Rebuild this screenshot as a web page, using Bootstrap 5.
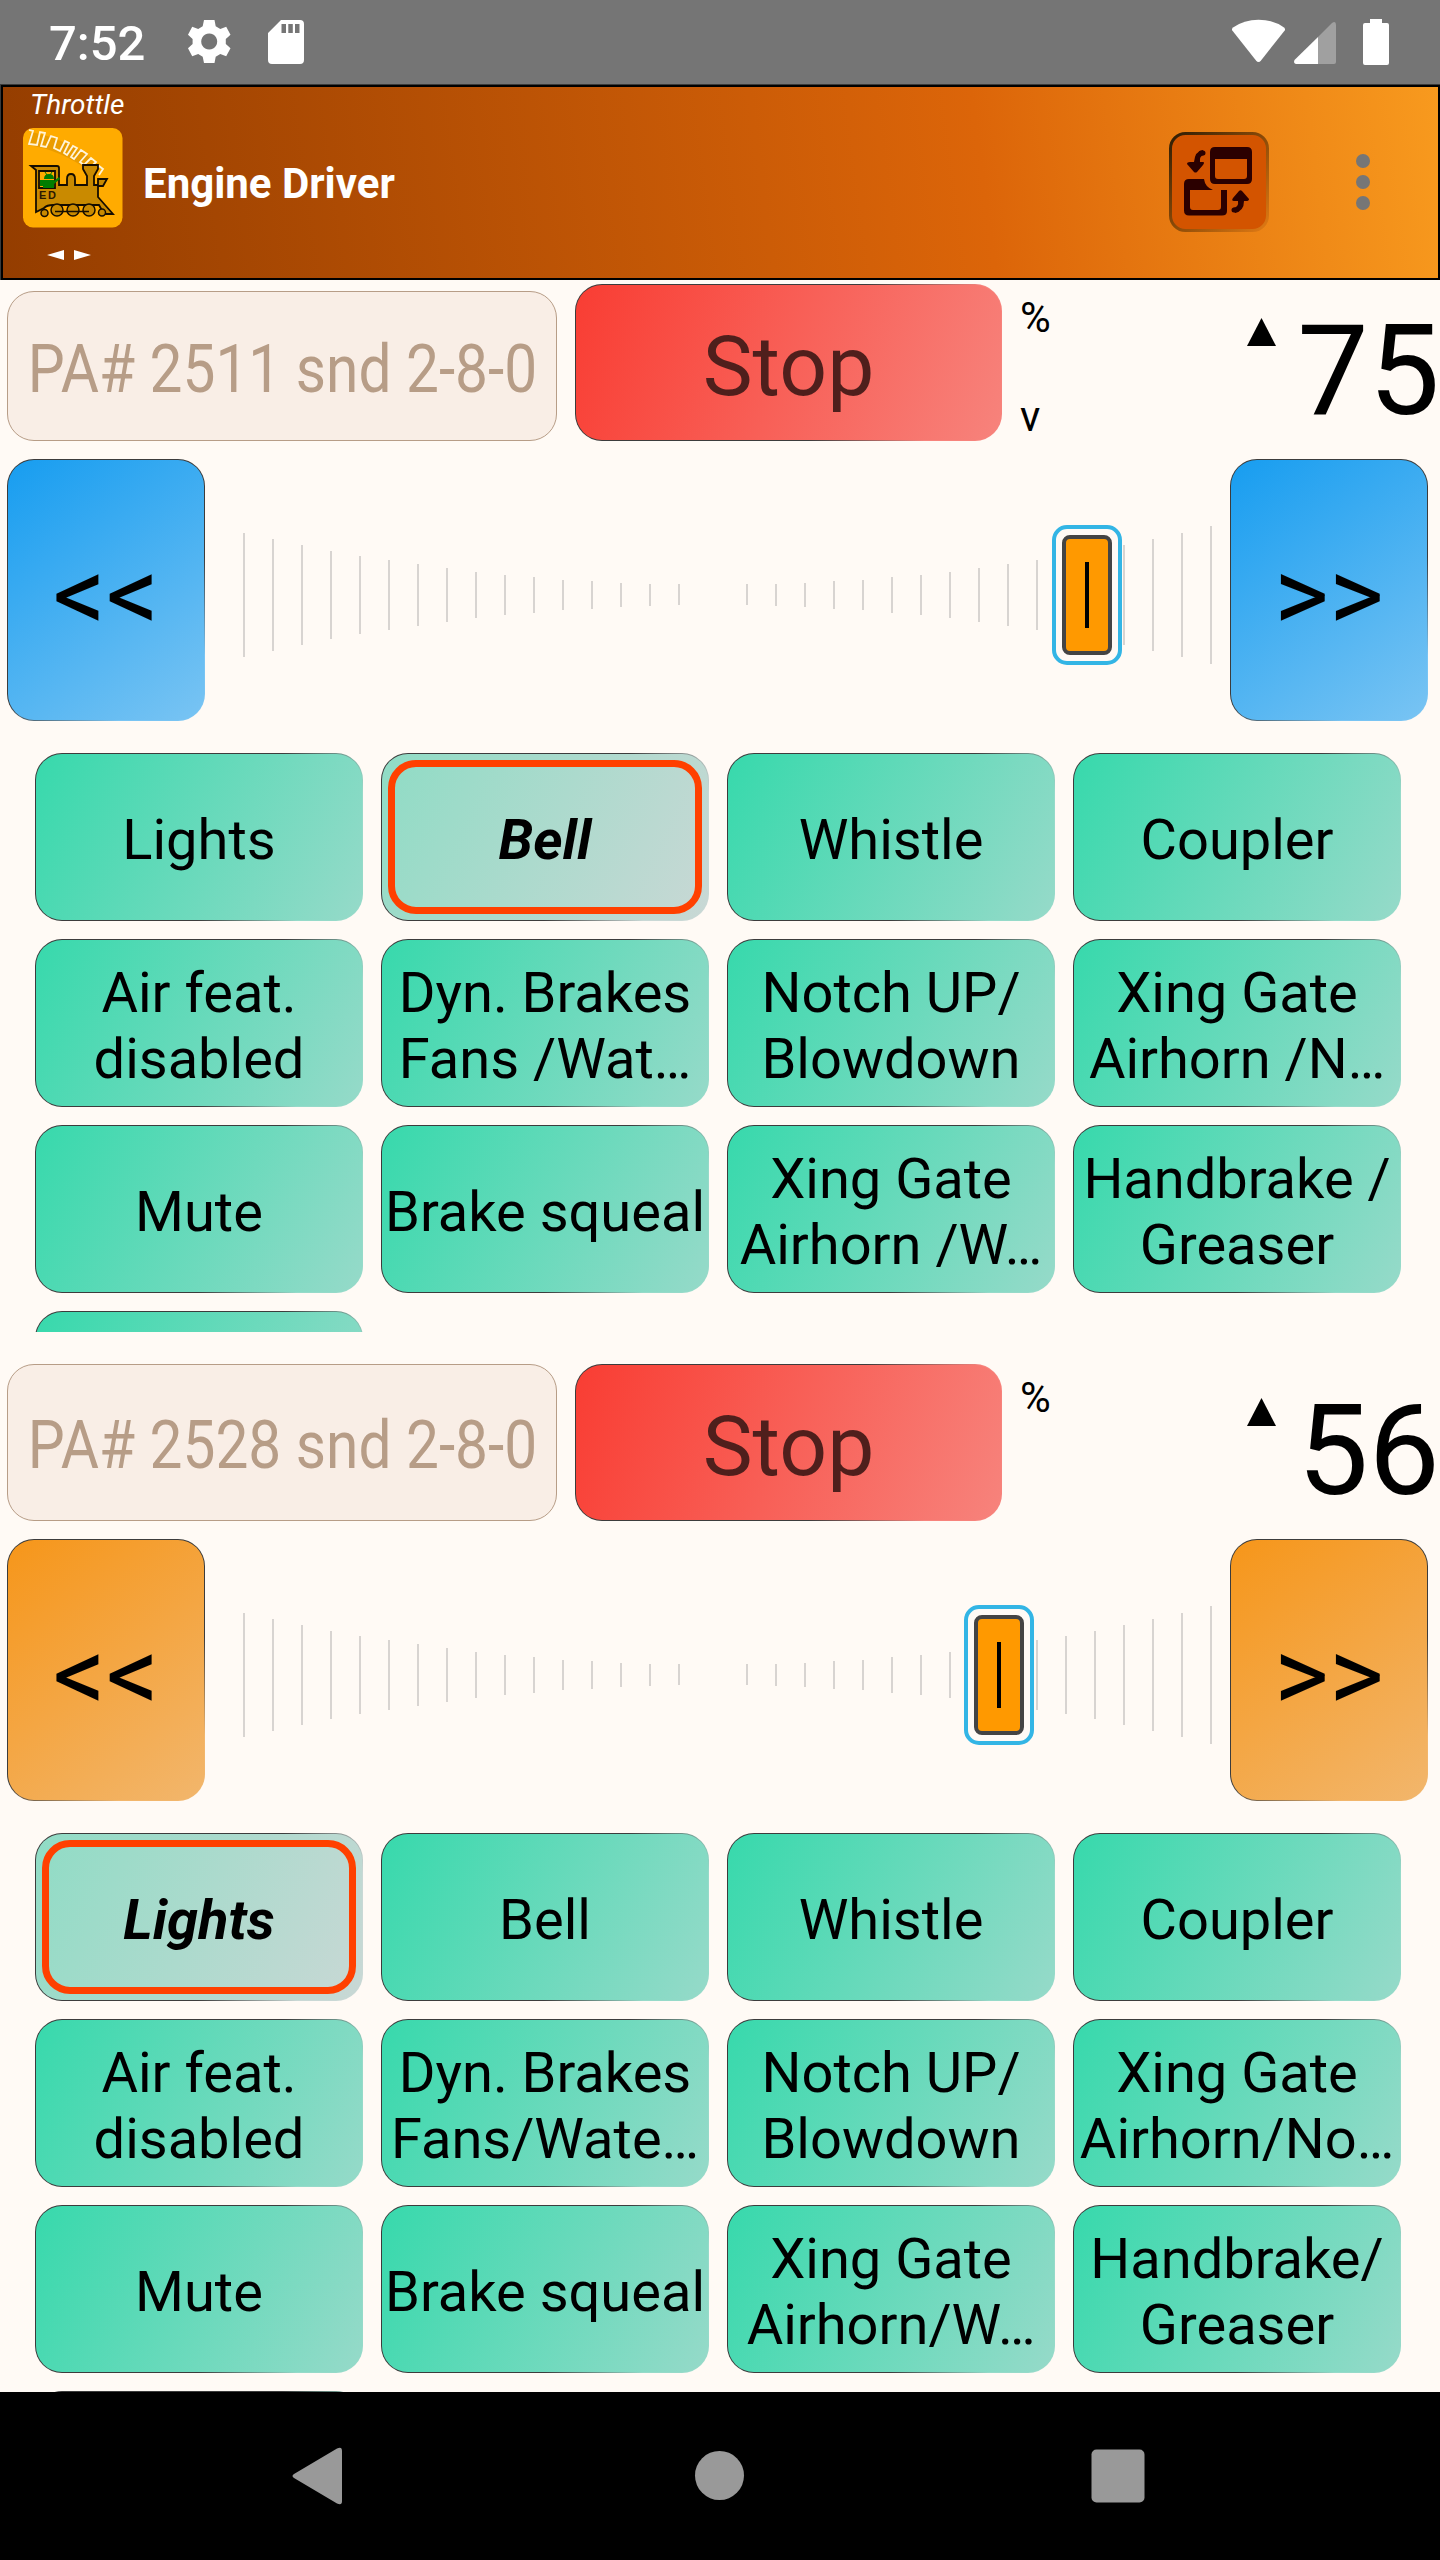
<!DOCTYPE html>
<html lang="en">
<head>
<meta charset="utf-8">
<meta name="viewport" content="width=device-width, initial-scale=1">
<title>Engine Driver</title>
<link rel="stylesheet" href="https://cdn.jsdelivr.net/npm/bootstrap@5.3.0/dist/css/bootstrap.min.css">
<style>
body{background:#fffaf5;font-family:Roboto,sans-serif;color:#000;width:1440px;height:2560px;overflow:hidden}
svg{display:block;flex:none}
.statusbar{height:84px;background:#757575;color:#fff;padding:0 50px 0 49px}
.clock{font-size:49px;font-weight:500;line-height:84px;padding-top:4px;width:138px}
.sdcard{margin-left:37px}
.appbar{height:196px;border-top:1px solid #3a3a3a;border-left:1px solid #3a3a3a}
.appbar-in{border:2px solid #000;background:linear-gradient(82.3deg,#943d00,#dc6509 68%,#f89a1e);padding:0 68px 0 20px}
.brandcol{width:100px}
.screenname{font-size:28px;font-style:italic;line-height:33px;color:#fff;padding-left:7px;margin-top:1px}
.apptitle{font-size:42px;font-weight:700;color:#fff;line-height:1;padding:2px 0 0 20px}
.overflowdots{margin:67px 0 0 87px}
.throttle{height:1080px}
.headrow{height:161px;padding-left:7px}
.btn.pad{--bs-btn-color:#000;font-family:inherit;border:1px solid transparent;border-radius:27px;padding:0;display:flex;align-items:center;justify-content:center;color:#000;white-space:nowrap;flex:none;
 background:linear-gradient(var(--ang),var(--c1),var(--c2)) padding-box,linear-gradient(var(--ang),#3c3c3c 60%,var(--c2) 84%) border-box}
.btn.loco{width:550px;height:150px;background:#f9eee6;border-color:#b79d87;color:#b79d87;font-size:67.5px;line-height:1;padding-top:6px}
.btn.loco.tall{height:157px;padding-top:5px}
.loco span{transform:scaleX(.868)}
.btn.stop{--ang:110.2deg;--c1:#f93d33;--c2:#f7837c;width:427px;height:157px;margin-left:18px;font-size:84px;line-height:1;padding-top:8px;color:#4f1f1c}
.btn.dir{width:198px;height:262px;font-size:105px;line-height:1;padding-top:10px;--ang:142.9deg}
.blue{--c1:#179df0;--c2:#79c4f3}
.amber{--c1:#f6961a;--c2:#f2b66c}
.units{font-size:42px;line-height:1;padding:17px 0 3px;margin-left:18px;height:161px;width:40px}
.uparrow{margin:38px 21px 0 0}
.speedval{font-size:127px;line-height:1;height:134px}
.dirrow{margin-top:18px;padding:0 11px 0 7px;height:262px}
.fngrid{display:grid;grid-template-columns:repeat(4,328px);grid-auto-rows:168px;gap:18px;padding-left:35px;margin-top:32px;height:579px;overflow:hidden}
.throttle + .throttle .fngrid{height:559px}
.throttle + .throttle{height:1032px}
.btn.fn{--ang:117.1deg;--c1:#37d9ac;--c2:#96dac9;font-size:56px;line-height:66px;padding-top:6px}
.btn.fn.on{--c1:#8fdcc5;--c2:#c9d8d5;font-weight:700;font-style:italic;padding:6px}
.on span{border:7px solid #ff4000;border-radius:28px;width:314px;height:154px;line-height:146px}
.navkeys{height:168px;background:#000}
</style>
<script src="https://cdn.jsdelivr.net/npm/bootstrap@5.3.0/dist/js/bootstrap.bundle.min.js"></script>
</head>
<body class="d-flex flex-column">
<svg width="0" height="0" class="position-absolute">
 <symbol id="ticks" viewBox="205 459 1025 262">
  <path stroke="#d8d4d1" stroke-width="2" fill="none" d="M244 533v124M273 539v112M302 545v100M331 551v88M360 556v78M389 560v70M418 564v62M447 568v54M476 572v46M505 575v40M534 577v36M563 580v30M592 581v28M621 583v24M650 584v22M679 584v21M747 584v21M776 584v22M805 583v24M834 581v28M863 580v30M892 577v36M921 575v40M950 572v46M979 568v54M1008 564v62M1037 560v70M1066 556v78M1095 551v88M1124 545v100M1153 539v112M1182 533v124M1211 526v138"/>
 </symbol>
 <symbol id="knob" viewBox="0 0 70 140">
  <rect x="2" y="2" width="66" height="136" rx="13" fill="#fffaf5" stroke="#33b5e5" stroke-width="4"/>
  <rect x="12" y="12" width="46" height="116" rx="6" fill="#ff9900" stroke="#444" stroke-width="4"/>
  <path d="M35 37v66" stroke="#000" stroke-width="4"/>
 </symbol>
</svg>

<div class="statusbar d-flex align-items-center flex-shrink-0">
 <div class="clock">7:52</div>
 <svg width="44" height="46" viewBox="0 0 44 46"><path fill="#fff" fill-rule="evenodd" d="M17 1h10.500l1.200 6.300 4.600 2.700 5.900-2.300 4.300 8-4.700 4.200v5.200l4.700 4.200-4.300 8-5.900-2.300-4.600 2.700-1.200 6.300h-10.500l-1.300-6.300-4.500-2.700-6 2.300-4.200-8 4.600-4.200v-5.200l-4.600-4.200 4.200-8 6 2.300 4.500-2.700zM22.200 14.500a8 8 0 1 0 .01 0z"/></svg>
 <svg class="sdcard" width="36" height="46" viewBox="0 0 36 46"><path fill="#fff" fill-rule="evenodd" d="M13 1h19a4 4 0 0 1 4 4v36a4 4 0 0 1-4 4H4a4 4 0 0 1-4-4V14zM13.500 5v9h4.500V5zM20.300 5v9h4.500V5zM27 5v9h4.500V5z"/></svg>
 <svg class="ms-auto" width="160" height="48" viewBox="1230 18 160 48">
  <path fill="#fff" d="M1232.300 30.500Q1231.300 29 1233 27.500Q1244 19.700 1258.500 19.700T1284 27.500Q1285.700 29 1284.700 30.500L1261 60.500Q1258.500 63.500 1256 60.500z"/>
  <path fill="#fff" d="M1318 37v27h-22q-3-1-1.500-4z"/>
  <path fill="#a0a0a0" d="M1318 37l14-14q4-2.500 4 2v37q0 2-2 2h-16z"/>
  <path fill="#fff" d="M1370 19h12v4h5q2 0 2 2v38q0 2-2 2h-22q-2 0-2-2V25q0-2 2-2h5z"/>
 </svg>
</div>

<header class="appbar flex-shrink-0 d-flex">
 <div class="appbar-in flex-grow-1 d-flex align-items-start">
  <div class="brandcol">
   <div class="screenname">Throttle</div>
   <svg style="margin-top:7px" width="100" height="132" viewBox="0 0 100 132">
    <rect width="99.500" height="99.500" rx="10" fill="#ffab00"/>
    <path d="M5 17L8 4Q45 11 71 33L66 43Q38 22 5 17z" fill="#d99000" opacity=".55"/>
    <path fill="none" stroke="#fff4d8" stroke-width="1.800" d="M6 2l4 1-4 13 8 1 3-13 5 1-4 13 5 1 5-11 6 2-3 10 6 3 5-10 4 2-5 10 3 2 6-9 4 2-6 9 3 2 7-9 6 4-7 8 4 3 7-7 5 4-6 6 4 3 5-5 4 3-4 6"/>
    <path fill="#c98a00" stroke="#150d00" stroke-width="1.800" d="M8 38H34q2 0 2 2V57H44V51q0-5 4-5t4 5v6h12V48l-4-7v-4h15v4l-4 7v9h4V51h9l-4 7h-5v11L90 86H81L76 77H30q-6 0-9 3l-8 4V42z"/>
    <path fill="#ffab00" stroke="#150d00" stroke-width="1.800" d="M16 43H32V60H16z"/>
    <path fill="#007d00" d="M21 51q0-5 5-5t5 5zM20 52h11v8h-11zM17 52h3v6h-3zM31 53l5-4 1 2-6 5z"/>
    <path stroke="#007d00" d="M22 44l2 3M29 44l-2 3"/>
    <text x="16" y="70.500" font-family="Liberation Sans,sans-serif" font-size="11" font-weight="700" fill="#2c1900" textLength="17">ED</text>
    <g fill="#c98a00" stroke="#150d00" stroke-width="1.500"><circle cx="34" cy="82" r="6"/><circle cx="50" cy="82" r="6"/><circle cx="66" cy="82" r="6"/><circle cx="21.500" cy="85" r="3.500"/><circle cx="79" cy="84.500" r="3.500"/><path d="M32 83.500H66"/></g>
    <path fill="#fff" d="M24 127l17-5v10zM68 127l-17-5v10z"/>
   </svg>
  </div>
  <div class="apptitle align-self-center">Engine Driver</div>
  <svg class="ms-auto" style="margin-top:45px" width="100" height="100" viewBox="0 0 100 100">
   <defs><linearGradient id="edge" x1="0" y1="0" x2="1" y2="1"><stop offset="0" stop-color="#2e1d05"/><stop offset=".5" stop-color="#8a4a08"/><stop offset="1" stop-color="#e07a14"/></linearGradient></defs>
   <rect x="1.500" y="1.500" width="97" height="97" rx="15" fill="#d35400" stroke="url(#edge)" stroke-width="3"/>
   <g fill="#2b0000"><path fill-rule="evenodd" d="M46 15H78q5 0 5 5V47q0 5-5 5H46q-5 0-5-5V20q0-5 5-5zM46 27V44q0 3 3 3H75q3 0 3-3V27z"/>
   <path fill-rule="evenodd" d="M20 47H35q1 8 9 11H21V75q0 3 3 3H49q3 0 3-3V58h6V79q0 4.500-5 4.500H20q-5 0-5-5V52q0-5 5-5z"/>
   <path d="M18 32q0-2 3-2h4q1-11 9-12l1 5q-5 1-4 7h3q2 0 0 3l-6 7q-1.500 1-3 0zM80 67q0 2-3 2h-2q0 10-9 12l-2-5q6-1 5-7h-4q-3 0-1-3l6-7q1.500-1.500 3 0z"/></g>
   <path d="M34 21h-2M66 78h-1" stroke="#2b0000" stroke-width="5" stroke-linecap="round"/>
  </svg>
  <svg class="overflowdots" width="14" height="56" viewBox="0 0 14 56"><g fill="#767676"><circle cx="7" cy="7" r="7"/><circle cx="7" cy="28" r="7"/><circle cx="7" cy="49" r="7"/></g></svg>
 </div>
</header>

<section class="throttle flex-shrink-0">
 <div class="headrow d-flex align-items-end">
  <button class="btn pad loco"><span>PA# 2511 snd 2-8-0</span></button>
  <button class="btn pad stop">Stop</button>
  <div class="units d-flex flex-column justify-content-between"><span>%</span><span>v</span></div>
  <svg class="uparrow ms-auto align-self-start" width="29" height="28" viewBox="0 0 29 28"><path d="M14.500 0L29 28H0z"/></svg>
  <div class="speedval">75</div>
 </div>
 <div class="dirrow d-flex">
  <button class="btn pad dir blue">&lt;&lt;</button>
  <svg width="1025" height="262"><use href="#ticks"/><use href="#knob" x="847" y="66" width="70" height="140"/></svg>
  <button class="btn pad dir blue">&gt;&gt;</button>
 </div>
 <div class="fngrid">
  <button class="btn pad fn">Lights</button>
  <button class="btn pad fn on"><span>Bell</span></button>
  <button class="btn pad fn">Whistle</button>
  <button class="btn pad fn">Coupler</button>
  <button class="btn pad fn">Air feat.<br>disabled</button>
  <button class="btn pad fn">Dyn. Brakes<br>Fans /Wat…</button>
  <button class="btn pad fn">Notch UP/<br>Blowdown</button>
  <button class="btn pad fn">Xing Gate<br>Airhorn /N…</button>
  <button class="btn pad fn">Mute</button>
  <button class="btn pad fn">Brake squeal</button>
  <button class="btn pad fn">Xing Gate<br>Airhorn /W…</button>
  <button class="btn pad fn">Handbrake /<br>Greaser</button>
  <button class="btn pad fn"></button>
 </div>
</section>

<section class="throttle flex-shrink-0">
 <div class="headrow d-flex align-items-end">
  <button class="btn pad loco tall"><span>PA# 2528 snd 2-8-0</span></button>
  <button class="btn pad stop">Stop</button>
  <div class="units"><span>%</span></div>
  <svg class="uparrow ms-auto align-self-start" width="29" height="28" viewBox="0 0 29 28"><path d="M14.500 0L29 28H0z"/></svg>
  <div class="speedval">56</div>
 </div>
 <div class="dirrow d-flex">
  <button class="btn pad dir amber">&lt;&lt;</button>
  <svg width="1025" height="262"><use href="#ticks"/><use href="#knob" x="759" y="66" width="70" height="140"/></svg>
  <button class="btn pad dir amber">&gt;&gt;</button>
 </div>
 <div class="fngrid">
  <button class="btn pad fn on"><span>Lights</span></button>
  <button class="btn pad fn">Bell</button>
  <button class="btn pad fn">Whistle</button>
  <button class="btn pad fn">Coupler</button>
  <button class="btn pad fn">Air feat.<br>disabled</button>
  <button class="btn pad fn">Dyn. Brakes<br>Fans/Wate…</button>
  <button class="btn pad fn">Notch UP/<br>Blowdown</button>
  <button class="btn pad fn">Xing Gate<br>Airhorn/No…</button>
  <button class="btn pad fn">Mute</button>
  <button class="btn pad fn">Brake squeal</button>
  <button class="btn pad fn">Xing Gate<br>Airhorn/W…</button>
  <button class="btn pad fn">Handbrake/<br>Greaser</button>
  <button class="btn pad fn"></button>
 </div>
</section>

<nav class="navkeys flex-shrink-0">
 <svg width="1440" height="168" viewBox="0 2392 1440 168" fill="#999">
  <path d="M294 2474L337 2448.500Q342 2446 342 2451V2501Q342 2506 337 2503.500L294 2478Q291 2476 294 2474z"/>
  <circle cx="719.500" cy="2475.500" r="24.500"/>
  <rect x="1091.500" y="2449.500" width="53" height="53" rx="5"/>
 </svg>
</nav>
</body>
</html>
